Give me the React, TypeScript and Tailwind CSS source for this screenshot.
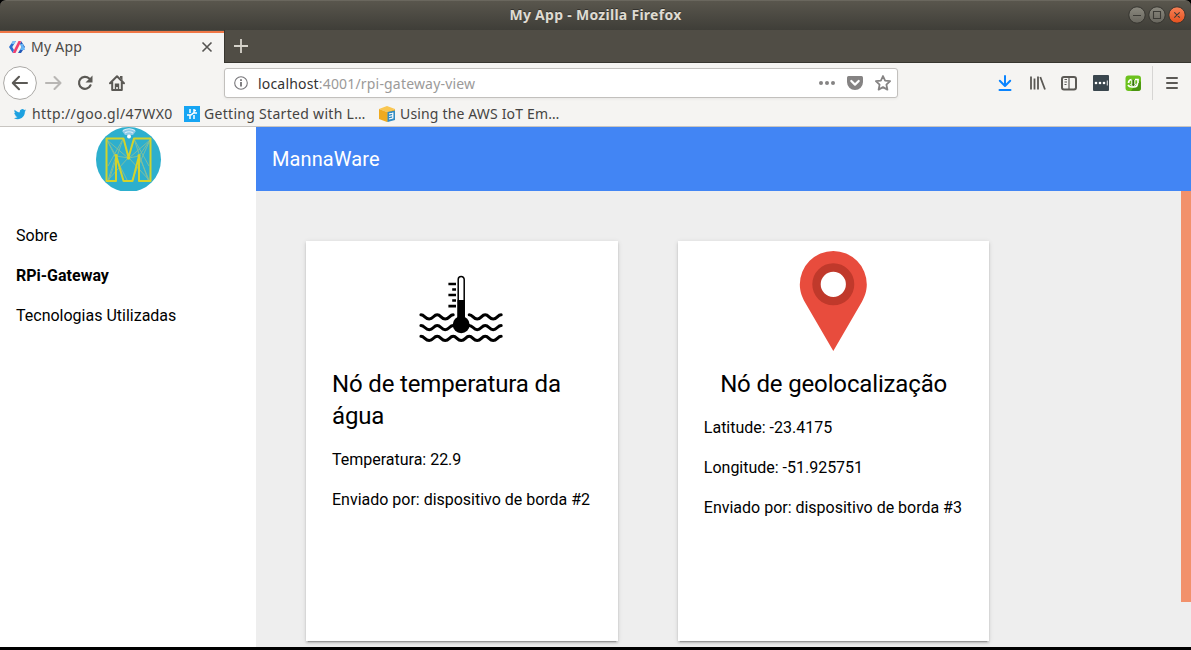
import React from "react";

const ui = "font-['Noto_Sans','Open_Sans',sans-serif]";

function TitleBar() {
  return (
    <header className="relative flex h-[30px] shrink-0 items-center justify-center rounded-t-[6px] border-t border-[#6a675e] bg-linear-to-b from-[#59564d] to-[#3f3e38]">
      <h1 className="-mt-[2px] text-[14px] leading-[26px] font-bold tracking-[0.28px] text-[#dfdbd2] [text-shadow:0_-1px_0_#33322e]">
        My App - Mozilla Firefox
      </h1>
      <svg className="absolute top-[4px] right-[4px]" width="60" height="20" viewBox="0 0 60 20" fill="none">
        <defs>
          <linearGradient id="grey" x1="0" y1="0" x2="0" y2="1">
            <stop offset="0" stopColor="#8b897f" />
            <stop offset="1" stopColor="#67655d" />
          </linearGradient>
          <linearGradient id="orange" x1="0" y1="0" x2="0" y2="1">
            <stop offset="0" stopColor="#f78258" />
            <stop offset="1" stopColor="#e5501d" />
          </linearGradient>
        </defs>
        <circle cx="10" cy="10" r="8.2" fill="url(#grey)" stroke="#35342f" />
        <circle cx="30" cy="10" r="8.2" fill="url(#grey)" stroke="#35342f" />
        <circle cx="50" cy="10" r="8.2" fill="url(#orange)" stroke="#35342f" />
        <path d="M6 10.5h8M26.5 6.5h7v7h-7zM47.3 7.3l5.4 5.4M52.7 7.3l-5.4 5.4" stroke="#3c3b36" strokeWidth="1.1" />
      </svg>
    </header>
  );
}

function TabStrip() {
  return (
    <div className="flex h-[33px] shrink-0 bg-[#504d45]">
      <div className="mt-px flex h-[32px] w-[224px] items-center border-t-2 border-[#f07746] bg-[#f5f4f2] pr-[11px] pb-[2px] pl-[9px]">
        <svg width="16" height="12" viewBox="0 0 16 12">
          <path d="M4 0h3L3.300 6l1.700 3-1.200 3L0 6z" fill="#2a6fd0" />
          <path d="M4 0h3L5.200 3H2z" fill="#7cc0f5" />
          <path d="M12 0l4 6-4 6H9l3.700-6L11 3z" fill="#2359b8" />
          <path d="M14 3l2 6-2 0-1.300-3L11 3z" fill="#64b5f6" />
          <path d="M16 6l-2 3h-3l1.700-3z" fill="#64b5f6" />
          <path d="M3.800 12L5 9l4.500-9H12L11 3 6.500 12z" fill="#f03f6e" />
        </svg>
        <span className="ml-[6px] text-[14px] leading-[20px] tracking-[0.25px] text-[#4a4947]">My App</span>
        <svg className="ml-auto" width="12" height="12" viewBox="0 0 12 12">
          <path d="M1.500 1.500l9 9M10.500 1.500l-9 9" stroke="#555452" strokeWidth="1.600" />
        </svg>
      </div>
      <div className="flex grow items-start border-b border-l border-[#37352f] pt-[9px] pl-[9px]">
        <svg width="14" height="14" viewBox="0 0 14 14">
          <path d="M7 0v14M0 7h14" stroke="#d6d3ca" strokeWidth="1.800" />
        </svg>
      </div>
    </div>
  );
}

function AddressBar() {
  return (
    <div className="ml-[97px] flex h-[30px] w-[674px] items-center rounded-[3px] border border-[#c2c0bd] bg-white pr-[5px] pl-[9px] shadow-[0_1px_3px_rgba(0,0,0,0.06)]">
      <svg width="14" height="14" viewBox="0 0 14 14" fill="none">
        <circle cx="7" cy="7" r="6.300" stroke="#77767a" strokeWidth="1.100" />
        <path d="M7 6v4.500M7 3.200V5" stroke="#6b6a6d" strokeWidth="1.700" />
      </svg>
      <span className="mt-[2px] ml-[10px] text-[14px] leading-[20px] tracking-[0.18px] text-[#9b9a99]">
        <span className="text-[#343332]">localhost</span>:4001/rpi-gateway-view
      </span>
      <svg className="ml-auto" width="74" height="18" viewBox="0 0 74 18" fill="none">
        <g fill="#858383">
          <circle cx="3" cy="9" r="2" />
          <circle cx="9" cy="9" r="2" />
          <circle cx="15" cy="9" r="2" />
          <path d="M30.500 2h13a1.800 1.800 0 0 1 1.500 1.800V8a8 8 0 0 1-16 0V3.800a1.800 1.800 0 0 1 1.500-1.800z" />
        </g>
        <path d="M33.300 7l3.700 3.600L40.700 7" stroke="#fff" strokeWidth="2.200" strokeLinecap="round" strokeLinejoin="round" />
        <path d="M65 2l2.100 4.600 5 .6-3.700 3.400 1 5L65 13.100l-4.400 2.500 1-5-3.700-3.400 5-.6z" stroke="#858383" strokeWidth="1.800" strokeLinejoin="round" />
      </svg>
    </div>
  );
}

function ToolBar() {
  return (
    <div className="flex h-[39px] shrink-0 items-center">
      <svg className="ml-[2px]" width="125" height="36" viewBox="0 0 125 36" fill="none">
        <circle cx="18" cy="18" r="16.400" fill="#fff" stroke="#aaa8a5" />
        <path d="M25 18H11.500M17 11.800L10.800 18l6.200 6.200" stroke="#5b5955" strokeWidth="2.100" strokeLinecap="round" strokeLinejoin="round" />
        <path d="M44 18h14M52.500 12l6 6-6 6" stroke="#b8b6b4" strokeWidth="2.100" strokeLinecap="round" strokeLinejoin="round" />
        <path d="M88.500 20.300A6 6 0 1 1 87.200 13.500" stroke="#5b5955" strokeWidth="2.200" strokeLinecap="round" />
        <path d="M90.500 10.500v7h-7z" fill="#5b5955" />
        <path d="M108 18.300l7-7 7 7M110.200 17v8h9.600v-8" stroke="#5b5955" strokeWidth="2" strokeLinecap="round" strokeLinejoin="round" />
        <path d="M118 11h2.500v4.500L118 13zM112.800 18.500h4.400V25h-1.400v-3h-1.600v3h-1.400z" fill="#5b5955" />
      </svg>
      <AddressBar />
      <svg className="ml-[97px]" width="188" height="34" viewBox="0 0 188 34" fill="none">
        <path d="M10 10v9.500M4.800 14.800L10 20l5.200-5.200M4.500 24h11" stroke="#0a84ff" strokeWidth="2" strokeLinecap="round" strokeLinejoin="round" />
        <path d="M36 10.500v13M39.500 12.500v11M43 10.500v13M45.300 11l4.700 12.500" stroke="#5b5955" strokeWidth="1.800" />
        <rect x="67" y="11" width="14" height="12.500" rx="2" stroke="#5b5955" strokeWidth="2" />
        <path d="M74 11v12M69.500 13.500h2.500M69.500 16h2.500M69.500 18.500h2" stroke="#5b5955" strokeWidth="1.200" />
        <rect x="98" y="9" width="16" height="16" rx="1" fill="#3a464e" />
        <g fill="#fff">
          <circle cx="101" cy="17" r="1.300" />
          <circle cx="105" cy="17" r="1.300" />
          <circle cx="109" cy="17" r="1.300" />
          <path d="M111.800 14.500h.9v5h-.9z" />
        </g>
        <rect x="130.500" y="9.500" width="15.500" height="15.500" rx="3" fill="#6cc11d" />
        <path d="M136 24.900L143.500 14l2.400 2v6a3 3 0 0 1-3 3z" fill="#4a9410" />
        <path d="M136.500 13.500q-3 .5-3 3.500M133 19q1 2 4 2h2q3.500 0 3.500-4M140 13.500h3v3.500" stroke="#fff" strokeWidth="1.700" />
        <path d="M136.300 14h4v4h1.500l-3.500 3.200-3.500-3.200h1.500z" fill="#fff" />
        <path d="M137.300 14h2v4.500h1l-2 1.800-2-1.800h1z" fill="#347109" />
        <path d="M157.500 0v34" stroke="#d6d5d3" />
        <path d="M172 12h10M172 17h10M172 22h10" stroke="#5b5955" strokeWidth="2" strokeLinecap="round" />
      </svg>
    </div>
  );
}

function Bookmarks() {
  return (
    <nav className="flex h-[25px] shrink-0 items-center border-b border-[#c8c5c1] text-[14px] leading-[20px] text-[#454442]">
      <svg className="ml-[13px]" width="14" height="14" viewBox="0 0 24 24" fill="#1da1e0">
        <path d="M22.500 5.700c-.8.300-1.600.6-2.500.7.900-.5 1.600-1.400 1.900-2.400-.8.500-1.800.9-2.700 1.100A4.300 4.300 0 0 0 11.800 9C8.200 8.800 5 7.100 2.900 4.500c-1.100 2-.6 4.500 1.300 5.800-.7 0-1.400-.2-2-.5 0 2.100 1.500 3.900 3.500 4.300-.6.200-1.300.2-2 .1.600 1.700 2.200 3 4.100 3A8.700 8.700 0 0 1 1.500 19c8.400 5.300 18.900-.4 18.900-11.100.8-.6 1.500-1.300 2.100-2.200z" />
      </svg>
      <span className="ml-[5px] w-[141px] tracking-[0.38px] whitespace-nowrap">http://goo.gl/47WX0</span>
      <svg className="ml-[11px]" width="16" height="16" viewBox="0 0 16 16">
        <path fill="#16a5f3" d="M0 0h16v16H0z" />
        <path d="M6 3v4M6 9v4M10 3v4M10 9v4M3 9h3c2.500 0 2-2 4-2h3M10 4.500h2" stroke="#fff" strokeWidth="1.500" fill="none" />
      </svg>
      <span className="ml-[4px] w-[162px] tracking-[0.3px] whitespace-nowrap">Getting Started with L…</span>
      <svg className="ml-[13px]" width="16" height="16" viewBox="0 0 16 16">
        <path d="M0 3L8 0l8 3-8 3z" fill="#f9c64f" />
        <path d="M0 3l8 3v10l-8-3z" fill="#efaa20" />
        <path d="M8 6l8-3v10l-8 3z" fill="#f5b52e" />
        <path d="M8.500 6L16 4.500v9.500L8.500 16z" fill="#318cc4" />
        <path d="M10 8l4-1M10 10.500l4-1M10 13l4-1M13.800 6.500v6" stroke="#fff" strokeWidth="1.200" />
      </svg>
      <span className="ml-[5px] tracking-[0.16px] whitespace-nowrap">Using the AWS IoT Em…</span>
    </nav>
  );
}

function Logo() {
  return (
    <svg className="ml-[96px] block" width="66" height="64" viewBox="0 0 66 64" fill="none">
      <circle cx="32.500" cy="32.500" r="32.500" fill="#2dafce" />
      <g stroke="#85bf9a" strokeWidth="0.900">
        <path d="M11 13L32 31L12 53M11 13L31 53M27 12L13 53M27 12L12 39M54 13L33 31L53 53M54 13L36 53M38 12L52 53M38 12L53 39M11 13L20 29M54 13L43 29M20 29L33 31L43 29M20 29L12 53M43 29L53 53" />
      </g>
      <path d="M10.500 11.500H27.500L32.500 30.500L38 11.500H54.500V54H43L43 29L36.500 54H27.500L20 28V54H10.500Z" stroke="#d2d32c" strokeWidth="2" strokeLinejoin="round" />
      <g fill="#d2d32c">
        <circle cx="32.500" cy="31" r="1.800" />
        <circle cx="20" cy="28.500" r="1.500" />
        <circle cx="43" cy="28.500" r="1.500" />
      </g>
      <path d="M26 4q7-5 14 0l-3 4H29z" fill="#8fc9e8" />
      <path d="M27 3.500q6-3.500 12 0M29 6q4-2.500 8 0" stroke="#d9eff9" strokeWidth="1.200" />
      <circle cx="33" cy="9.500" r="2" fill="#fff" />
    </svg>
  );
}

function WaterTemperatureIcon() {
  return (
    <svg width="100" height="100" viewBox="0.800 0 100 100" fill="none" stroke="#000">
      <g strokeWidth="3" strokeLinecap="round">
        <path d="M9.700 63.800C13.500 63.800 13.800 68 18 68S22.300 63.800 26 63.800s4 4.200 8 4.200S38.400 63.800 42 63.800M58 63.800c3.800 0 4 4.200 8 4.200S70.300 63.800 74 63.800s4 4.200 8 4.200S86.300 63.800 90 63.800" />
        <path d="M9.700 74.500C13.500 74.500 13.800 78.700 18 78.700S22.300 74.500 26 74.500s4 4.200 8 4.200S38.400 74.500 42 74.500M58 74.500c3.800 0 4 4.200 8 4.200S70.300 74.500 74 74.500s4 4.200 8 4.200S86.300 74.500 90 74.500" />
        <path d="M9.700 85.300C13.500 85.300 13.800 89.500 18 89.500S22.300 85.300 26 85.300s4 4.200 8 4.200S38.400 85.300 42 85.300s4 4.200 8 4.200S54.400 85.300 58 85.300s4 4.200 8 4.200S70.300 85.300 74 85.300s4 4.200 8 4.200S86.300 85.300 90 85.300" />
      </g>
      <path d="M47 68V28.500a3 3 0 0 1 6 0V68" strokeWidth="1.500" />
      <path d="M46.300 49h7.400v20h-7.400z" fill="#000" stroke="none" />
      <circle cx="50" cy="73.800" r="8.500" fill="#000" stroke="none" />
      <path d="M37.200 33h7.600M41 38.500h3.800M37.200 44h7.600M41 49.500h3.800M37.200 55.200h7.600" strokeWidth="2.700" />
    </svg>
  );
}

function MapPinIcon() {
  return (
    <svg width="100" height="100" viewBox="0.700 0 100 100">
      <path d="M50 0A33.500 33.500 0 0 0 16.500 33.500c0 7 2.500 13 5 17.500L50 100l28.500-49c2.500-4.500 5-10.500 5-17.500A33.500 33.500 0 0 0 50 0z" fill="#e84c3d" />
      <circle cx="50" cy="33.300" r="16.800" fill="#fff" stroke="#c0392b" strokeWidth="8.400" />
    </svg>
  );
}

function NodeCard({ icon, title, lines }: { icon: React.ReactNode; title: string; lines: string[] }) {
  return (
    <article className="flex h-[400px] w-[311.550px] flex-col items-center bg-white px-[26px] pt-[10px] shadow-[0_2px_2px_0_rgba(0,0,0,0.14),0_1px_5px_0_rgba(0,0,0,0.12),0_3px_1px_-2px_rgba(0,0,0,0.2)]">
      {icon}
      <h2 className="mt-[17px] text-[24px] leading-[32px] tracking-[-0.15px]">{title}</h2>
      <div className="mt-4 flex flex-col gap-4 self-stretch text-[16px] leading-6 tracking-[-0.01px] whitespace-nowrap">
        {lines.map((line) => (
          <p key={line}>{line}</p>
        ))}
      </div>
    </article>
  );
}

function Page() {
  return (
    <main className="flex h-[520px] shrink-0 font-[Roboto,sans-serif] text-black">
      <aside className="w-[256px] shrink-0 bg-white">
        <Logo />
        <nav className="mt-[25px] flex flex-col px-4 text-[16px] leading-[40px]">
          <a>Sobre</a>
          <a className="font-bold">RPi-Gateway</a>
          <a>Tecnologias Utilizadas</a>
        </nav>
      </aside>
      <section className="flex grow flex-col bg-[#eeeeee]">
        <div className="flex h-16 shrink-0 items-center bg-[#4285f4] px-4 text-[20px] tracking-[0.1px] text-white">MannaWare</div>
        <div className="flex grow justify-between">
          <div className="flex gap-[60.300px] pt-[50px] pl-[50px]">
            <NodeCard
              icon={<WaterTemperatureIcon />}
              title="Nó de temperatura da água"
              lines={["Temperatura: 22.9", "Enviado por: dispositivo de borda #2"]}
            />
            <NodeCard
              icon={<MapPinIcon />}
              title="Nó de geolocalização"
              lines={["Latitude: -23.4175", "Longitude: -51.925751", "Enviado por: dispositivo de borda #3"]}
            />
          </div>
          <div className="h-[411px] w-[10px] bg-[#f2916b]" />
        </div>
      </section>
    </main>
  );
}

export default function App() {
  return (
    <div className={`flex h-[650px] w-[1191px] flex-col overflow-hidden bg-black ${ui}`}>
      <TitleBar />
      <TabStrip />
      <div className="flex flex-col bg-[#f5f4f2]">
        <ToolBar />
        <Bookmarks />
      </div>
      <Page />
    </div>
  );
}
